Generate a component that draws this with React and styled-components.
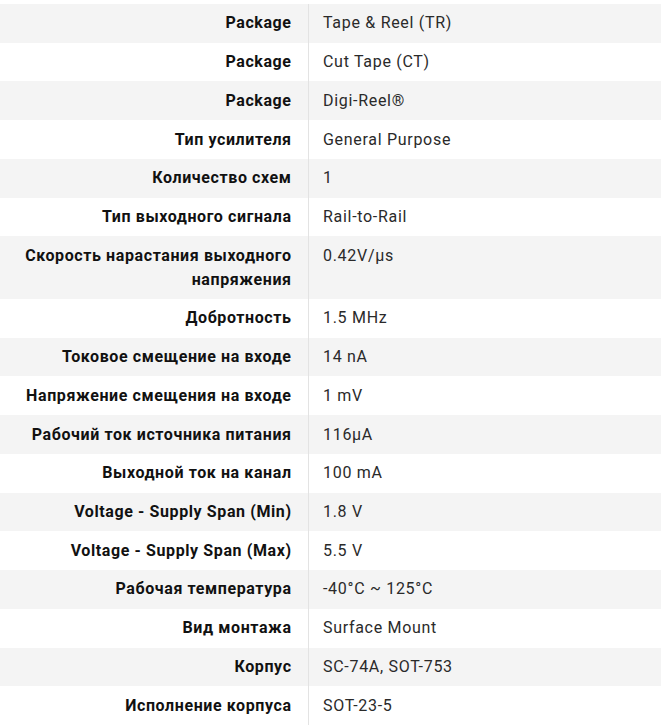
import styled, { createGlobalStyle } from "styled-components";

const specs = [
  ["Package", "Tape & Reel (TR)"],
  ["Package", "Cut Tape (CT)"],
  ["Package", "Digi-Reel®"],
  ["Тип усилителя", "General Purpose"],
  ["Количество схем", "1"],
  ["Тип выходного сигнала", "Rail-to-Rail"],
  ["Скорость нарастания выходного напряжения", "0.42V/µs"],
  ["Добротность", "1.5 MHz"],
  ["Токовое смещение на входе", "14 nA"],
  ["Напряжение смещения на входе", "1 mV"],
  ["Рабочий ток источника питания", "116µA"],
  ["Выходной ток на канал", "100 mA"],
  ["Voltage - Supply Span (Min)", "1.8 V"],
  ["Voltage - Supply Span (Max)", "5.5 V"],
  ["Рабочая температура", "-40°C ~ 125°C"],
  ["Вид монтажа", "Surface Mount"],
  ["Корпус", "SC-74A, SOT-753"],
  ["Исполнение корпуса", "SOT-23-5"],
];

export default function App() {
  return (
    <>
      <GlobalStyle />
      <SpecTable>
        {specs.map(([label, value], i) => (
          <Row key={i} $striped={i % 2 === 0}>
            <Label>{label}</Label>
            <Value>{value}</Value>
          </Row>
        ))}
      </SpecTable>
    </>
  );
}

const GlobalStyle = createGlobalStyle`
  body {
    margin: 0;
    background: #fff;
    font-family: Roboto, "Open Sans", sans-serif;
  }
`;

const SpecTable = styled.div`
  display: flex;
  flex-direction: column;
  padding-top: 4px;
  font-size: 16px;
  line-height: 24px;
`;

const Row = styled.div`
  display: grid;
  grid-template-columns: 309px 1fr;
  background: ${(p) => (p.$striped ? "#f4f4f4" : "#fff")};
`;

const Label = styled.div`
  box-sizing: border-box;
  padding: 7.36px 16.4px 7.36px 16px;
  border-right: 1px solid #e3e3e3;
  text-align: right;
  font-weight: 700;
  letter-spacing: 0.6px;
  color: #111;
`;

const Value = styled.div`
  padding: 7.36px 14px;
  letter-spacing: 0.7px;
  color: #2a2a2a;
`;
